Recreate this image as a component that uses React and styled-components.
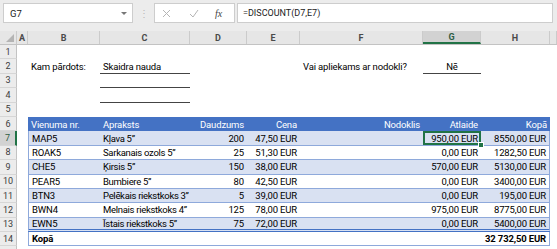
import React from "react";
import styled, { createGlobalStyle, css } from "styled-components";

const COLS = "17px 11px 72px 90px 57px 53px 123px 58px 69px 1fr";
const GREEN = "#217346";
const BLUE = "#4472C4";
const BAND = "#D9E1F2";
const LINE = "#8EA9DB";

const GlobalStyle = createGlobalStyle`
  html, body {
    margin: 0;
    padding: 0;
    background: #fff;
  }
  body {
    font-family: Roboto, "Liberation Sans", sans-serif;
    font-size: 9.5px;
    letter-spacing: -0.15px;
    color: #000;
    overflow: hidden;
  }
`;

const Window = styled.div`
  width: 557px;
  height: 249px;
  overflow: hidden;
  display: flex;
  flex-direction: column;
  background: #fff;
`;

/* ---------- formula bar ---------- */

const FormulaBar = styled.div`
  flex: none;
  height: 31px;
  box-sizing: border-box;
  padding: 3px 4px 0 3px;
  background: #ececec;
  display: flex;
  align-items: flex-start;
`;

const Box = styled.div`
  height: 20px;
  box-sizing: border-box;
  background: #fff;
  border: 1px solid #cdcdcd;
  display: flex;
  align-items: center;
`;

const NameBox = styled(Box)`
  width: 130px;
  padding: 0 5px 0 6px;
  justify-content: space-between;
  font-size: 9.5px;
  letter-spacing: 0;
  color: #222;
`;

const Caret = styled.span`
  width: 0;
  height: 0;
  border-left: 3px solid transparent;
  border-right: 3px solid transparent;
  border-top: 3px solid #777;
`;

const Grip = styled.div`
  width: 21px;
  height: 20px;
  display: flex;
  align-items: center;
  justify-content: center;
  color: #b8b8b8;
  font-size: 10px;
`;

const FxBox = styled(Box)`
  width: 81px;
  margin-right: 2px;
  padding-left: 7px;
  gap: 18px;
`;

const Fx = styled.span`
  margin-left: -2px;
  font-family: "Liberation Serif", serif;
  font-style: italic;
  font-size: 10px;
  letter-spacing: 0;
  color: #444;
`;

const FormulaInput = styled(Box)`
  flex: 1;
  padding-left: 5px;
  font-size: 9px;
  letter-spacing: 0;
  color: #222;
`;

/* ---------- column headers ---------- */

const HeadStrip = styled.div`
  flex: none;
  height: 13px;
  display: grid;
  grid-template-columns: ${COLS};
  background: #e6e6e6;
  border-bottom: 1px solid #c3c3c3;
`;

const ColHead = styled.div`
  display: flex;
  align-items: center;
  justify-content: center;
  font-size: 9px;
  font-weight: 700;
  letter-spacing: 0;
  color: #4a4a4a;
  box-sizing: border-box;
  border-right: 1px solid #cbcbcb;
  ${(p) =>
    p.$active &&
    css`
      background: #d2d2d2;
      color: #2f5d45;
      border-bottom: 2px solid ${GREEN};
    `}
`;

const Corner = styled(ColHead)`
  justify-content: flex-end;
  align-items: flex-end;
  padding: 0 2px 2px 0;
`;

/* ---------- sheet ---------- */

const Sheet = styled.div`
  flex: 1;
  display: flex;
  flex-direction: column;
`;

const Row = styled.div`
  flex: none;
  height: 14.4px;
  display: grid;
  grid-template-columns: ${COLS};
`;

const RowHead = styled.div`
  display: flex;
  align-items: center;
  justify-content: center;
  box-sizing: border-box;
  background: #ececec;
  border-right: 1px solid #c3c3c3;
  border-bottom: 1px solid #d6d6d6;
  font-size: 9px;
  letter-spacing: 0;
  color: #3c3c3c;
  ${(p) =>
    p.$active &&
    css`
      background: #d2d2d2;
      color: #2f5d45;
      border-right: 2px solid ${GREEN};
    `}
`;

const Cell = styled.div`
  min-width: 0;
  box-sizing: border-box;
  padding: 0 3px;
  display: flex;
  align-items: center;
  white-space: nowrap;
  justify-content: ${(p) =>
    p.$align === "right" ? "flex-end" : p.$align === "center" ? "center" : "flex-start"};
  font-weight: ${(p) => (p.$bold ? 700 : 400)};
  ${(p) => p.$tight && css`letter-spacing: -0.3px;`}
  ${(p) => p.$rule && css`border-bottom: 1px solid #444;`}
`;

const TCell = styled(Cell)`
  position: relative;
  background: ${(p) => (p.$tone === "head" ? BLUE : p.$tone === "band" ? BAND : "#fff")};
  color: ${(p) => (p.$tone === "head" ? "#fff" : "#000")};
  border-bottom: ${(p) =>
    p.$tone === "head" ? "none" : p.$double ? `3px double ${BLUE}` : `1px solid ${LINE}`};
  ${(p) => p.$first && p.$tone !== "head" && css`border-left: 1px solid ${LINE};`}
  ${(p) => p.$last && p.$tone !== "head" && css`border-right: 1px solid ${LINE};`}
  ${(p) =>
    p.$selected &&
    css`
      box-shadow: inset 0 0 0 2px ${GREEN};
      &::after {
        content: "";
        position: absolute;
        right: -3px;
        bottom: -3px;
        width: 4px;
        height: 4px;
        background: ${GREEN};
        border: 1px solid #fff;
        z-index: 2;
      }
    `}
`;

const COL_LETTERS = ["A", "B", "C", "D", "E", "F", "G", "H", ""];
const ALIGN = ["left", "left", "right", "right", "right", "right", "right"];

const HEAD = ["Vienuma nr.", "Apraksts", "Daudzums", "Cena", "Nodoklis", "Atlaide", "Kopā"];

const ITEMS = [
  ["MAP5", "Kļava 5”", "200", "47,50 EUR", "", "950,00 EUR", "8550,00 EUR"],
  ["ROAK5", "Sarkanais ozols 5”", "25", "51,30 EUR", "", "0,00 EUR", "1282,50 EUR"],
  ["CHE5", "Ķirsis 5”", "150", "38,00 EUR", "", "570,00 EUR", "5130,00 EUR"],
  ["PEAR5", "Bumbiere 5”", "80", "42,50 EUR", "", "0,00 EUR", "3400,00 EUR"],
  ["BTN3", "Pelēkais riekstkoks 3”", "5", "39,00 EUR", "", "0,00 EUR", "195,00 EUR"],
  ["BWN4", "Melnais riekstkoks 4”", "125", "78,00 EUR", "", "975,00 EUR", "8775,00 EUR"],
  ["EWN5", "Īstais riekstkoks 5”", "75", "72,00 EUR", "", "0,00 EUR", "5400,00 EUR"],
];

const PlainRow = ({ n, children }) => (
  <Row>
    <RowHead>{n}</RowHead>
    {children}
  </Row>
);

const TableRow = ({ n, values, tone, double, bold, selectedCol, active }) => (
  <Row>
    <RowHead $active={active}>{n}</RowHead>
    <Cell />
    {values.map((v, i) => (
      <TCell
        key={i}
        $tone={tone}
        $align={ALIGN[i]}
        $double={double}
        $bold={bold}
        $tight={i === 1 && tone !== "head"}
        $first={i === 0}
        $last={i === values.length - 1}
        $selected={selectedCol === i}
      >
        {v}
      </TCell>
    ))}
    <Cell />
  </Row>
);

const Empty = ({ count }) => Array.from({ length: count }, (_, i) => <Cell key={i} />);

const CrossIcon = () => (
  <svg width="9" height="9" viewBox="0 0 9 9">
    <path d="M1 1 L8 8 M8 1 L1 8" stroke="#b5b5b5" strokeWidth="1" fill="none" />
  </svg>
);

const CheckIcon = () => (
  <svg width="10" height="9" viewBox="0 0 10 9">
    <path d="M1 5 L4 8 L9 1" stroke="#b5b5b5" strokeWidth="1" fill="none" />
  </svg>
);

const CornerIcon = () => (
  <svg width="8" height="8" viewBox="0 0 8 8">
    <polygon points="8,0 8,8 0,8" fill="#b4b4b4" />
  </svg>
);

export default function App() {
  return (
    <Window>
      <GlobalStyle />
      <FormulaBar>
        <NameBox>
          G7
          <Caret />
        </NameBox>
        <Grip>⋮</Grip>
        <FxBox>
          <CrossIcon />
          <CheckIcon />
          <Fx>fx</Fx>
        </FxBox>
        <FormulaInput>=DISCOUNT(D7,E7)</FormulaInput>
      </FormulaBar>

      <HeadStrip>
        <Corner>
          <CornerIcon />
        </Corner>
        {COL_LETTERS.map((c, i) => (
          <ColHead key={i} $active={c === "G"}>
            {c}
          </ColHead>
        ))}
      </HeadStrip>

      <Sheet>
        <PlainRow n={1}>
          <Empty count={9} />
        </PlainRow>
        <PlainRow n={2}>
          <Cell />
          <Cell>Kam pārdots:</Cell>
          <Cell $rule>Skaidra nauda</Cell>
          <Cell />
          <Cell />
          <Cell>Vai apliekams ar nodokli?</Cell>
          <Cell $rule $align="center">
            Nē
          </Cell>
          <Cell />
          <Cell />
        </PlainRow>
        <PlainRow n={3}>
          <Cell />
          <Cell />
          <Cell $rule />
          <Empty count={6} />
        </PlainRow>
        <PlainRow n={4}>
          <Cell />
          <Cell />
          <Cell $rule />
          <Empty count={6} />
        </PlainRow>
        <PlainRow n={5}>
          <Empty count={9} />
        </PlainRow>
        <TableRow n={6} values={HEAD} tone="head" />
        {ITEMS.map((item, i) => (
          <TableRow
            key={item[0]}
            n={7 + i}
            values={item}
            tone={i % 2 === 0 ? "band" : "plain"}
            double={i === ITEMS.length - 1}
            active={i === 0}
            selectedCol={i === 0 ? 5 : -1}
          />
        ))}
        <TableRow
          n={14}
          values={["Kopā", "", "", "", "", "", "32 732,50 EUR"]}
          tone="plain"
          bold
        />
        <PlainRow n="">
          <Empty count={9} />
        </PlainRow>
      </Sheet>
    </Window>
  );
}
